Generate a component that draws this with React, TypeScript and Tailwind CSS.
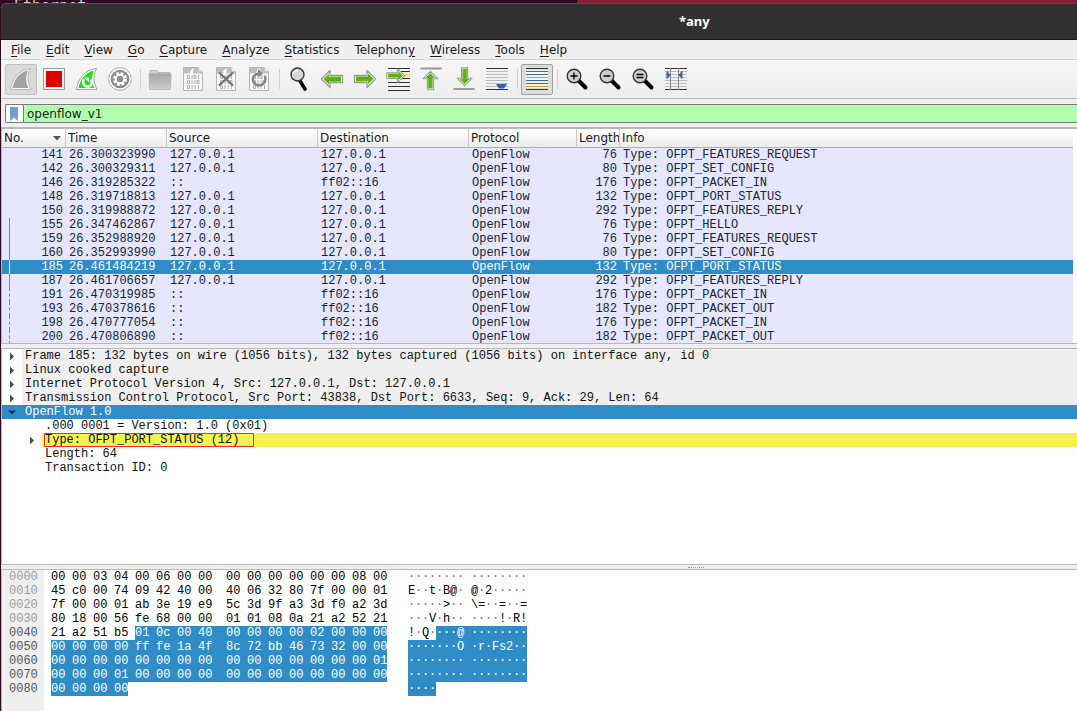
import React, { useState } from "react";

// Shape of one row in the packet list
interface IPacket {
  no: number;
  time: string;
  source: string;
  destination: string;
  length: number;
  info: string;
}

const LOCAL = "127.0.0.1";

const PACKETS: IPacket[] = [
  { no: 141, time: "26.300323990", source: LOCAL, destination: LOCAL, length: 76, info: "OFPT_FEATURES_REQUEST" },
  { no: 142, time: "26.300329311", source: LOCAL, destination: LOCAL, length: 80, info: "OFPT_SET_CONFIG" },
  { no: 146, time: "26.319285322", source: "::", destination: "ff02::16", length: 176, info: "OFPT_PACKET_IN" },
  { no: 148, time: "26.319718813", source: LOCAL, destination: LOCAL, length: 132, info: "OFPT_PORT_STATUS" },
  { no: 150, time: "26.319988872", source: LOCAL, destination: LOCAL, length: 292, info: "OFPT_FEATURES_REPLY" },
  { no: 155, time: "26.347462867", source: LOCAL, destination: LOCAL, length: 76, info: "OFPT_HELLO" },
  { no: 159, time: "26.352988920", source: LOCAL, destination: LOCAL, length: 76, info: "OFPT_FEATURES_REQUEST" },
  { no: 160, time: "26.352993990", source: LOCAL, destination: LOCAL, length: 80, info: "OFPT_SET_CONFIG" },
  { no: 185, time: "26.461484219", source: LOCAL, destination: LOCAL, length: 132, info: "OFPT_PORT_STATUS" },
  { no: 187, time: "26.461706657", source: LOCAL, destination: LOCAL, length: 292, info: "OFPT_FEATURES_REPLY" },
  { no: 191, time: "26.470319985", source: "::", destination: "ff02::16", length: 176, info: "OFPT_PACKET_IN" },
  { no: 193, time: "26.470378616", source: "::", destination: "ff02::16", length: 182, info: "OFPT_PACKET_OUT" },
  { no: 198, time: "26.470777054", source: "::", destination: "ff02::16", length: 176, info: "OFPT_PACKET_IN" },
  { no: 200, time: "26.470806890", source: "::", destination: "ff02::16", length: 182, info: "OFPT_PACKET_OUT" },
];

const HEX_ROWS = [
  "00 00 03 04 00 06 00 00 00 00 00 00 00 00 08 00",
  "45 c0 00 74 09 42 40 00 40 06 32 80 7f 00 00 01",
  "7f 00 00 01 ab 3e 19 e9 5c 3d 9f a3 3d f0 a2 3d",
  "80 18 00 56 fe 68 00 00 01 01 08 0a 21 a2 52 21",
  "21 a2 51 b5 01 0c 00 40 00 00 00 00 02 00 00 00",
  "00 00 00 00 ff fe 1a 4f 8c 72 bb 46 73 32 00 00",
  "00 00 00 00 00 00 00 00 00 00 00 00 00 00 00 01",
  "00 00 00 01 00 00 00 00 00 00 00 00 00 00 00 00",
  "00 00 00 00",
];

// First byte that belongs to the OpenFlow layer
const SELECTION_START = 0x44;

// Menu labels with the position of the mnemonic letter
const MENUS: [string, number][] = [
  ["File", 0],
  ["Edit", 0],
  ["View", 0],
  ["Go", 0],
  ["Capture", 0],
  ["Analyze", 0],
  ["Statistics", 0],
  ["Telephony", 8],
  ["Wireless", 0],
  ["Tools", 0],
  ["Help", 0],
];

const Svg: React.FC<{ children: React.ReactNode }> = ({ children }) => (
  <svg width="24" height="24" viewBox="0 0 24 24" fill="none" aria-hidden="true">
    {children}
  </svg>
);

const FIN = "M1.5 22.5C3 12 9 3 21.5 1.5C18.5 7 18 15 22 22.5Z";
const FIN_INNER = "M3.5 21C5 13 10 5.5 19 3.5C16.5 9 16.5 15.5 19.5 21Z";
const ARROW = "M1.5 12L10 3.5V8.5H22.5V15.5H10V20.5Z";
const ARROW_INNER = "M3.5 12L9 6.5V9.5H21V14.5H9V17.5Z";

const Arrow: React.FC<{ transform?: string }> = ({ transform }) => (
  <g transform={transform}>
    <path d={ARROW} fill="#fff" stroke="#9b9b9b" strokeWidth="1.3" strokeLinejoin="round" />
    <path d={ARROW_INNER} fill="url(#green)" />
  </g>
);

// Sheet with three lines of bits: 0101, 0110, 0111
const Page: React.FC<{ children?: React.ReactNode }> = ({ children }) => (
  <Svg>
    <path d="M2.5 .5H17L21.5 5V23.5H2.5Z" fill="#f8f8f8" stroke="#b5b5b5" />
    <path d="M3 1H16.5V5.5H21V6.5H3Z" fill="#bdbdbd" />
    <path d="M9 6.5C9 3.5 10.5 1.5 13 1.5C12 3 12 5 12.5 6.5Z" fill="#fff" />
    <path d="M17 .5V5H21.5" fill="#eee" stroke="#a5a5a5" />
    <g stroke="#b0b0b0" strokeWidth="1">
      <path d="M6.5 8.5H8.5V11.5H6.5ZM11 8V12M13 8.500H15V11.500H13ZM17.500 8V12" />
      <path d="M6.500 13.500H8.500V16.500H6.500ZM11 13V17M14 13V17M16 13.500H18V16.500H16Z" />
      <path d="M6.500 18.500H8.500V21.500H6.500ZM11 18V22M14 18V22M17.500 18V22" />
    </g>
    {children}
  </Svg>
);

const Lens: React.FC<{ children?: React.ReactNode }> = ({ children }) => (
  <Svg>
    <path d="M14 14L20.5 20.5" stroke="#000" strokeWidth="4" strokeLinecap="round" />
    <circle cx="9" cy="9" r="6.8" fill="#cfcfcf" stroke="#333" strokeWidth="1.4" />
    <g stroke="#000" strokeWidth="1.4">{children}</g>
  </Svg>
);

const ICONS: Record<string, React.ReactNode> = {
  start: (
    <Svg>
      <path d={FIN} fill="#f4f4f4" stroke="#b8b8b8" />
      <path d={FIN_INNER} fill="#a3a3a3" />
    </Svg>
  ),
  stop: (
    <Svg>
      <path d="M1.5 1.5H22.5V22.5H1.5Z" fill="#f6f6f6" stroke="#999" />
      <path d="M4 4H20V20H4Z" fill="#dc0000" />
    </Svg>
  ),
  restart: (
    <Svg>
      <path d={FIN} fill="#fff" stroke="#a5a5a5" />
      <path d={FIN_INNER} fill="#1fe01a" />
      <path d="M9 12C7 15.5 9 19.500 12.500 19.500C16.500 19.500 18 15.500 16 12.500" stroke="#fff" strokeWidth="2.5" />
      <path d="M9 10.500H14V15.500Z" fill="#fff" />
    </Svg>
  ),
  options: (
    <Svg>
      <circle cx="12" cy="12" r="11.3" fill="#fff" stroke="#aaa" />
      <circle cx="12" cy="12" r="9.3" fill="#8d8d8d" />
      <circle cx="12" cy="12" r="5.5" stroke="#fff" strokeWidth="3" strokeDasharray="2.6 1.72" />
      <circle cx="12" cy="12" r="4.3" fill="#8d8d8d" stroke="#fff" strokeWidth="2" />
    </Svg>
  ),
  open: (
    <Svg>
      <path d="M2 3.5H9L10.5 5.5H22V9H2Z" fill="#d0d0d0" stroke="#b5b5b5" />
      <path d="M1 6.5H23L22.5 22.5H1.5Z" fill="url(#folder)" stroke="#b9b9b9" />
    </Svg>
  ),
  save: <Page />,
  close: (
    <Page>
      <path d="M5 5.5L19 18.5M19 5.5L5 18.5" stroke="#707070" strokeWidth="2.2" />
    </Page>
  ),
  reload: (
    <Page>
      <path d="M18 9C19.5 13 17 18.500 12 18.500C7.500 18.500 4.500 13.500 6.500 9.500C8 7.500 10 6.500 12 6.500" stroke="#858585" strokeWidth="2.4" />
      <path d="M11 2.5V10L16 6.5Z" fill="#858585" />
    </Page>
  ),
  find: (
    <Svg>
      <path d="M13 14L18 22" stroke="#000" strokeWidth="3.5" strokeLinecap="round" />
      <circle cx="10.5" cy="7.5" r="6.5" fill="#d6d6d6" stroke="#333" strokeWidth="1.4" />
      <path d="M6.5 7C7 4.5 9 3.5 11 3.5" stroke="#fff" strokeWidth="1.5" />
    </Svg>
  ),
  back: <Svg><Arrow /></Svg>,
  forward: <Svg><Arrow transform="rotate(180 12 12)" /></Svg>,
  jump: (
    <Svg>
      <path d="M2 1.5H24M2 15.5H24M2 19.5H24M2 23.5H24M14 4.5H24M14 11.5H24" stroke="#2e3436" strokeWidth="1.2" />
      <path d="M16 6H24V9.5H16Z" fill="#fce94f" />
      <Arrow transform="translate(20 -1) scale(-.85 .8)" />
    </Svg>
  ),
  first: (
    <Svg>
      <path d="M1.5 1.5H22.5" stroke="#999" strokeWidth="2" />
      <Arrow transform="translate(2 3) rotate(90 10 10) scale(.88)" />
    </Svg>
  ),
  last: (
    <Svg>
      <path d="M1.5 22H22.5" stroke="#999" strokeWidth="2" />
      <Arrow transform="translate(2 0) rotate(-90 10 10) scale(.88)" />
    </Svg>
  ),
  autoscroll: (
    <Svg>
      <path d="M1 1.5H23M1 22.5H23" stroke="#2e3436" strokeWidth="1.2" />
      <path d="M1 4.5H23M1 7.5H23M1 10.5H23M1 13.5H23M1 16.5H23M1 19.5H23" stroke="#babdb6" />
      <path d="M11 17H22L19 21.5H14Z" fill="#3465a4" />
    </Svg>
  ),
  colorize: (
    <Svg>
      <path d="M1 1.5H23M1 22.5H23" stroke="#2e3436" strokeWidth="1.2" />
      <path d="M1 3H23V21H1Z" fill="#f4f4f4" />
      <path d="M1 4.5H23" stroke="#ef2929" strokeWidth="1.2" />
      <path d="M1 7.5H23M1 13.5H23" stroke="#3465a4" strokeWidth="1.2" />
      <path d="M1 10.5H23" stroke="#73d216" strokeWidth="1.2" />
      <path d="M1 16.5H23" stroke="#75507b" strokeWidth="1.2" />
      <path d="M1 19.5H23" stroke="#c4a000" strokeWidth="1.2" />
    </Svg>
  ),
  zoomIn: <Lens><path d="M5.5 9H12.5M9 5.5V12.5" /></Lens>,
  zoomOut: <Lens><path d="M5.5 9H12.5" /></Lens>,
  zoomReset: <Lens><path d="M5.5 7.5H12.5M5.5 10.5H12.5" /></Lens>,
  resize: (
    <Svg>
      <path d="M1 1.5H23M1 22.5H23" stroke="#2e3436" strokeWidth="1.2" />
      <path d="M1 4.5H23M1 7.5H23M1 10.5H23M1 13.5H23M1 16.5H23M1 19.5H23" stroke="#babdb6" />
      <path d="M6.5 1V23M14.5 1V23" stroke="#888a85" />
      <path d="M3 4.5V11.5L6 8ZM18 4.500V11.500L15 8Z" fill="#3465a4" stroke="#3465a4" />
    </Svg>
  ),
};

// Toolbar buttons, split in the groups that the separators make
const TOOLBAR: [string, string][][] = [
  [["start", "Start capturing packets"], ["stop", "Stop capturing packets"], ["restart", "Restart current capture"], ["options", "Capture options"]],
  [["open", "Open a capture file"], ["save", "Save this capture file"], ["close", "Close this capture file"], ["reload", "Reload this file"]],
  [["find", "Find a packet"], ["back", "Go back"], ["forward", "Go forward"], ["jump", "Go to packet"], ["first", "First packet"], ["last", "Last packet"], ["autoscroll", "Auto scroll"]],
  [["colorize", "Colorize packets"]],
  [["zoomIn", "Zoom in"], ["zoomOut", "Zoom out"], ["zoomReset", "Normal size"], ["resize", "Resize columns"]],
];

const Toolbar: React.FC = () => (
  <div role="toolbar" className="flex h-[39px] items-center border-b border-[#b8b8b8] bg-linear-to-b from-[#f7f7f7] to-[#ededed] pl-1">
    {/* Gradients shared by the icons */}
    <svg width="0" height="0" className="absolute" aria-hidden="true">
      <defs>
        <linearGradient id="green" x1="0" y1="0" x2="0" y2="1">
          <stop offset="0" stopColor="#73c81a" />
          <stop offset="1" stopColor="#4e9a06" />
        </linearGradient>
        <linearGradient id="folder" x1="0" y1="0" x2="0" y2="1">
          <stop offset="0" stopColor="#a5a5a5" />
          <stop offset="1" stopColor="#cfcfcf" />
        </linearGradient>
      </defs>
    </svg>
    {TOOLBAR.map((group, i) => (
      <div key={i} className="flex items-center">
        {i > 0 && <span className="mx-[3px] h-5 w-px bg-[#d0d0d0]" />}
        {group.map(([icon, label]) => {
          const pressed = icon === "start" || icon === "colorize";
          return (
            <button
              key={icon}
              aria-label={label}
              className={
                pressed
                  ? `mr-px flex h-[31px] w-8 items-center justify-center rounded-xs border ${
                      icon === "start" ? "border-[#c3c3c3] bg-[#dadada]" : "border-[#a0a0a0] bg-[#dcdcdc]"
                    }`
                  : "mr-px flex h-[31px] w-8 items-center justify-center"
              }
            >
              {ICONS[icon]}
            </button>
          );
        })}
      </div>
    ))}
  </div>
);

const FilterBar: React.FC = () => {
  const [filter, setFilter] = useState<string>("openflow_v1");

  return (
    <div className="bg-[#efefef] pt-[5px] pb-1 pl-1">
      <div className="flex h-[19px] rounded-l-xs border border-r-0 border-[#787878] bg-white">
        <button aria-label="Filter bookmarks" className="flex w-[18px] items-center border-r border-[#787878] pl-1">
          <svg width="8" height="14" viewBox="0 0 8 14" aria-hidden="true">
            <path d="M0 0H8V14L4 10.5L0 14Z" fill="#729fcf" />
          </svg>
        </button>
        <input
          aria-label="Display filter"
          value={filter}
          onChange={(e) => setFilter(e.target.value)}
          className="min-w-0 flex-1 bg-[#afffaf] pl-[3px] outline-none"
        />
      </div>
    </div>
  );
};

const HEADERS = ["No.", "Time", "Source", "Destination", "Protocol", "Length", "Info"];

const PacketList: React.FC = () => {
  const [selected, setSelected] = useState<number>(185);

  // Conversation marker at the left of the number column
  const marker = (no: number) => {
    if (no < 155) return "";
    if (no === selected) return "border-l border-white";
    return no < 191 ? "border-l border-[#85859a]" : "border-l border-dashed border-[#85859a]";
  };

  return (
    <div className="h-[217px] shrink-0 overflow-hidden border-t-2 border-b border-l border-[#b8b8b8] bg-white pr-1">
      <table className="w-full table-fixed border-separate border-spacing-0">
        <colgroup>
          <col className="w-16" />
          <col className="w-[101px]" />
          <col className="w-[151px]" />
          <col className="w-[151px]" />
          <col className="w-[108px]" />
          <col className="w-[43px]" />
          <col />
        </colgroup>
        <thead>
          <tr className="bg-linear-to-b from-white to-[#ebebeb]">
            {HEADERS.map((h) => (
              <th key={h} className="overflow-hidden border-r border-b border-r-[#c9c9c9] border-b-[#b0b0b0] p-0 pl-0.5 text-left font-normal whitespace-nowrap last:border-r-0">
                <button className="flex h-[18px] w-full items-center justify-between overflow-hidden pr-1">
                  {h}
                  {h === "No." && (
                    <svg width="8" height="5" viewBox="0 0 8 5" aria-hidden="true">
                      <path d="M0 0H8L4 4.5Z" fill="#555" />
                    </svg>
                  )}
                </button>
              </th>
            ))}
          </tr>
        </thead>
        <tbody className="font-['Liberation_Mono',monospace] leading-[14px] whitespace-nowrap">
          {PACKETS.map((p) => (
            <tr
              key={p.no}
              onClick={() => setSelected(p.no)}
              className={p.no === selected ? "h-[14px] bg-[#308cc6] text-white" : "h-[14px] bg-[#e6e6ff] text-[#12272e]"}
            >
              <td className="p-0 pl-[7px]">
                <div className={`pr-[3px] text-right ${marker(p.no)}`}>{p.no}</div>
              </td>
              <td className="p-0 pl-[3px]">{p.time}</td>
              <td className="p-0 pl-[3px]">{p.source}</td>
              <td className="p-0 pl-[3px]">{p.destination}</td>
              <td className="p-0 pl-[3px]">OpenFlow</td>
              <td className="p-0 pr-[3px] text-right">{p.length}</td>
              <td className="p-0 pl-[3px]">Type: {p.info}</td>
            </tr>
          ))}
        </tbody>
      </table>
    </div>
  );
};

const Expander: React.FC<{ open?: boolean }> = ({ open }) => (
  <svg width="8" height="8" viewBox="0 0 8 8" className="mx-1.5 shrink-0" aria-hidden="true">
    <path d={open ? "M0 2.5H8L4 6.5Z" : "M2 .5L6 4.5L2 8.5Z"} fill={open ? "#14394f" : "#4d4d4d"} />
  </svg>
);

const LAYERS = [
  "Frame 185: 132 bytes on wire (1056 bits), 132 bytes captured (1056 bits) on interface any, id 0",
  "Linux cooked capture",
  "Internet Protocol Version 4, Src: 127.0.0.1, Dst: 127.0.0.1",
  "Transmission Control Protocol, Src Port: 43838, Dst Port: 6633, Seq: 9, Ack: 29, Len: 64",
];

const PacketDetails: React.FC = () => (
  <div className="h-[217px] shrink-0 overflow-hidden border-y border-l border-[#b8b8b8] bg-white font-['Liberation_Mono',monospace] leading-[14px] whitespace-nowrap text-[#111]">
    {LAYERS.map((layer) => (
      <div key={layer} className="flex h-[14px] items-center">
        <Expander />
        <span className="flex-1 bg-[#efefef] pl-[3px]">{layer}</span>
      </div>
    ))}
    <div className="flex h-[14px] items-center bg-[#308cc6] text-white">
      <Expander open />
      <span className="pl-[3px]">OpenFlow 1.0</span>
    </div>
    <div className="pl-[43px]">.000 0001 = Version: 1.0 (0x01)</div>
    <div className="flex h-[14px] items-center pl-5">
      <Expander />
      <div className="flex-1 bg-[#f7f251] pl-0.5">
        <span className="-my-px inline-block w-[210px] pl-px outline outline-[#f03030] -outline-offset-1">
          Type: OFPT_PORT_STATUS (12)
        </span>
      </div>
    </div>
    <div className="pl-[43px]">Length: 64</div>
    <div className="pl-[43px]">Transaction ID: 0</div>
  </div>
);

// Printable form of one byte
const toAscii = (byte: string) => {
  const code = parseInt(byte, 16);
  return code > 0x20 && code < 0x7f ? String.fromCharCode(code) : "·";
};

const HexDump: React.FC = () => (
  <div className="flex min-h-[142px] flex-1 border-t border-l border-[#b8b8b8] bg-white font-['Liberation_Mono',monospace] leading-[14px] text-black">
    <div className="w-[42px] bg-[#efefef] pl-[7px]">
      {HEX_ROWS.map((_, row) => (
        <div key={row} className={row * 16 + 15 < SELECTION_START ? "text-[#a0a0a0]" : "text-[#555]"}>
          {(row * 16).toString(16).padStart(4, "0")}
        </div>
      ))}
    </div>
    <div className="w-[357px] pl-[7px]">
      {HEX_ROWS.map((line, row) => (
        <div key={row} className="flex">
          {line.split(" ").map((byte, i, all) => {
            const on = row * 16 + i >= SELECTION_START;
            const width = i === all.length - 1 ? "w-[14px]" : i === 7 ? "w-7" : "w-[21px]";
            return (
              <span key={i} className={`${width} ${on ? "bg-[#308cc6] text-white" : ""}`}>
                {byte}
              </span>
            );
          })}
        </div>
      ))}
    </div>
    <div className="pl-[7px]">
      {HEX_ROWS.map((line, row) => (
        <div key={row} className="flex">
          {line.split(" ").map((byte, i) => {
            const on = row * 16 + i >= SELECTION_START;
            const char = toAscii(byte);
            return (
              <span
                key={i}
                className={`${i === 7 ? "w-[14px]" : "w-[7px]"} ${
                  on ? "bg-[#308cc6] text-white" : char === "·" ? "text-[#777]" : ""
                }`}
              >
                {char}
              </span>
            );
          })}
        </div>
      ))}
    </div>
  </div>
);

const App: React.FC = () => {
  return (
    <div className="flex min-h-screen flex-col overflow-hidden bg-[#300a24] font-['DejaVu_Sans',sans-serif] text-[12px] text-[#1a1a1a]">
      {/* Strip of the desktop that shows above the window */}
      <div className="flex h-[3px] overflow-hidden">
        <div className="flex-[577] font-['DejaVu_Sans_Mono',monospace] text-[15px] leading-3 text-[#cfcfcf]">
          <span className="ml-[14px]">Ethernet</span>
        </div>
        <div className="flex-[500] bg-[#8a1f33]" />
      </div>

      <div className="ml-px flex flex-1 flex-col overflow-hidden rounded-tl-md bg-[#efefef]">
        <header className="flex h-[37px] items-center border-t border-b border-t-[#4f4c4c] border-b-[#1c1b1b] bg-[#323030] pl-[63%]">
          <h1 className="font-['Noto_Sans',sans-serif] text-[13px] font-bold text-white">*any</h1>
        </header>

        <nav className="flex h-5 items-center gap-px border-b border-[#d3d3d3] pl-[3px]">
          {MENUS.map(([label, at]) => (
            <button key={label} className="px-[7px]">
              {label.slice(0, at)}
              <span className="underline underline-offset-2">{label[at]}</span>
              {label.slice(at + 1)}
            </button>
          ))}
        </nav>

        <Toolbar />
        <FilterBar />
        <PacketList />
        <div className="h-1 bg-[#efefef]" />
        <PacketDetails />
        {/* Splitter handle */}
        <div className="flex h-1 items-center justify-center pl-[314px]">
          <span className="w-4 border-t border-dotted border-[#999]" />
        </div>
        <HexDump />
      </div>
    </div>
  );
};

export default App;
